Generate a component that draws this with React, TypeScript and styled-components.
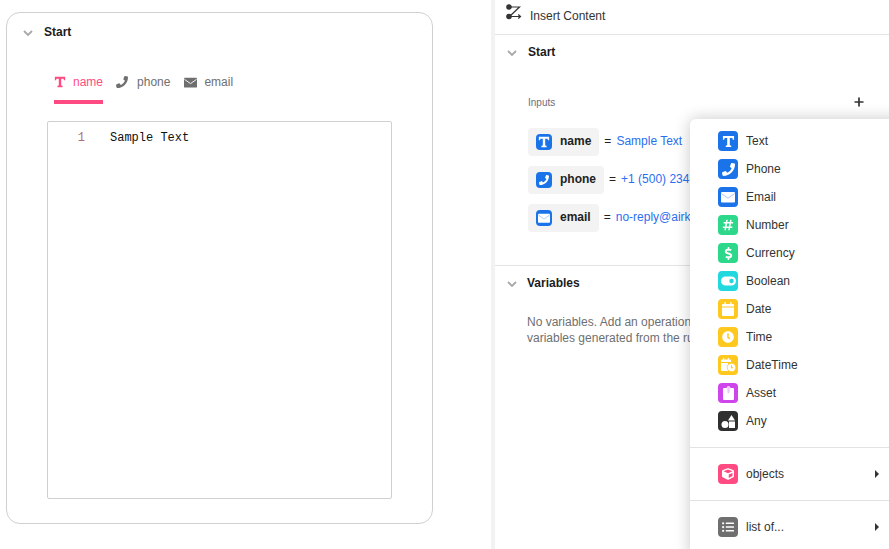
import React from "react";
import styled, { createGlobalStyle } from "styled-components";
import { FaPhone, FaHashtag, FaDollarSign, FaCube, FaListUl, FaClock } from "react-icons/fa";

const Global = createGlobalStyle`
  html, body { margin: 0; padding: 0; height: 100%; overflow: hidden; background: #fff; }
  body { font-family: "Liberation Sans", Arial, sans-serif; font-size: 12px; color: #222; }
  #root { height: 100%; }
`;

const Page = styled.div`
  display: flex;
  width: 889px;
  height: 549px;
  overflow: hidden;
  position: relative;
`;
const LeftPane = styled.div`
  width: 491px;
  flex: none;
  padding: 12px 58px 25px 6px;
  box-sizing: border-box;
`;
const Divider = styled.div`
  width: 4px;
  flex: none;
  background: #f2f2f2;
`;
const RightPane = styled.div`
  flex: 1;
  min-width: 0;
  display: flex;
  flex-direction: column;
`;
const Card = styled.div`
  height: 100%;
  box-sizing: border-box;
  border: 1px solid #d0d0d0;
  border-radius: 14px;
  padding: 0 40px 24px;
  display: flex;
  flex-direction: column;
`;
const SectionHead = styled.div<{ $inset: number; $h: number }>`
  display: flex;
  align-items: center;
  height: ${(p) => p.$h}px;
  margin-left: ${(p) => p.$inset}px;
  flex: none;
`;
const ChevronBox = styled.svg<{ $gap: number }>`
  width: 10px;
  height: 6px;
  margin-right: ${(p) => p.$gap}px;
  flex: none;
  margin-top: 2px;
`;
const SectionTitle = styled.span`
  font-size: 12px;
  font-weight: 700;
  color: #1c1c1c;
`;
const Tabs = styled.div`
  display: flex;
  align-items: flex-start;
  gap: 13px;
  margin: 19px 0 17px 7px;
  flex: none;
`;
const Tab = styled.div<{ $active?: boolean; $gap: number; $pad?: number }>`
  height: 34px;
  padding: 4px ${(p) => p.$pad ?? 0}px 0 0;
  box-sizing: border-box;
  display: flex;
  align-items: flex-start;
  gap: ${(p) => p.$gap}px;
  line-height: 16px;
  font-size: 12px;
  color: ${(p) => (p.$active ? "#ff4b82" : "#6f6f6f")};
  border-bottom: 4px solid ${(p) => (p.$active ? "#ff4b82" : "transparent")};
  svg { margin-top: 2px; flex: none; }
`;
const Editor = styled.div`
  flex: 1;
  border: 1px solid #d0d0d0;
  border-radius: 2px;
  display: flex;
  align-items: flex-start;
  padding-top: 8px;
  font-family: "Liberation Mono", "Courier New", monospace;
  font-size: 12px;
  line-height: 16px;
`;
const LineNo = styled.span`
  width: 37px;
  text-align: right;
  color: #b07070;
  flex: none;
`;
const Code = styled.span`
  margin-left: 25px;
  color: #111;
`;
const TopBar = styled.div`
  height: 35px;
  box-sizing: border-box;
  flex: none;
  border-bottom: 1px solid #e4e4e4;
  display: flex;
  align-items: flex-start;
  padding: 4px 0 0 11px;
  color: #333;
  span { margin: 5px 0 0 8px; line-height: 14px; }
`;
const StartSection = styled.div`
  height: 231px;
  box-sizing: border-box;
  flex: none;
  border-bottom: 1px solid #e4e4e4;
`;
const InputsHead = styled.div`
  display: flex;
  justify-content: space-between;
  align-items: center;
  margin: 25px 25px 18px 33px;
  height: 16px;
`;
const InputsLabel = styled.span`
  font-size: 10px;
  color: #6e6e80;
`;
const InputRow = styled.div`
  display: flex;
  align-items: flex-start;
  height: 28px;
  line-height: 26px;
  margin: 0 0 10px 33px;
  white-space: nowrap;
`;
const Chip = styled.div`
  display: flex;
  align-items: center;
  height: 28px;
  padding: 0 8px;
  background: #f3f3f3;
  border-radius: 4px;
  gap: 8px;
  font-weight: 700;
  font-size: 12px;
  color: #222;
`;
const ChipLabel = styled.span`
  align-self: flex-start;
`;
const Eq = styled.span`
  margin: 0 5px;
  color: #222;
`;
const Val = styled.span`
  color: #2a6ff0;
`;
const VarBody = styled.p`
  margin: 14px 0 0 32px;
  line-height: 16px;
  color: #6f6f6f;
  white-space: nowrap;
`;
const Menu = styled.div`
  position: absolute;
  left: 690px;
  top: 119px;
  width: 230px;
  height: 440px;
  background: #fff;
  border-radius: 6px;
  box-shadow: 0 0 16px rgba(0, 0, 0, 0.22);
  padding-top: 8px;
  box-sizing: border-box;
`;
const MenuRow = styled.div`
  height: 28px;
  display: flex;
  align-items: center;
  padding-left: 28px;
  gap: 8px;
  color: #333;
  position: relative;
`;
const MenuSep = styled.div`
  border-top: 1px solid #e2e2e2;
  height: 53px;
  box-sizing: border-box;
  display: flex;
  align-items: center;
`;
const Group = styled.div<{ $top?: number }>`
  width: 199px;
  margin-top: ${(p) => p.$top ?? 0}px;
`;
const Badge = styled.div<{ $bg: string; $size?: number }>`
  width: ${(p) => p.$size ?? 20}px;
  height: ${(p) => p.$size ?? 20}px;
  border-radius: 4px;
  background: ${(p) => p.$bg};
  color: #fff;
  display: flex;
  align-items: center;
  justify-content: center;
  flex: none;
`;
const Caret = styled.span`
  position: absolute;
  left: 185px;
  top: 10px;
  width: 0;
  height: 0;
  border-left: 4.5px solid #333;
  border-top: 4px solid transparent;
  border-bottom: 4px solid transparent;
`;

const Chevron = ({ gap = 11 }: { gap?: number }) => (
  <ChevronBox $gap={gap} viewBox="0 0 10 6">
    <path d="M1 1l4 4 4-4" fill="none" stroke="#a8a8a8" strokeWidth="1.8" />
  </ChevronBox>
);
const TIcon = ({ size = 13 }: { size?: number }) => (
  <svg width={size} height={size} viewBox="0 0 14 14" fill="currentColor">
    <path d="M1 1h12v4h-1.3l-.6-1.9H8.4v7.9l1.6.5V13H4v-1.5l1.6-.5V3.1H2.9L2.3 5H1z" />
  </svg>
);
const Env = ({ size = 14, line = "#a9c8f7" }: { size?: number; line?: string }) => (
  <svg width={size} height={size} viewBox="0 0 14 14">
    <rect x="0" y="2" width="14" height="10.5" rx="1" fill="currentColor" />
    <path d="M0.5 3.6L7 8.2l6.5-4.6" fill="none" stroke={line} strokeWidth="1" />
  </svg>
);
const Toggle = () => (
  <svg width="15" height="10" viewBox="0 0 15 10">
    <path fill="#fff" fillRule="evenodd" d="M4.5 0.5h6a4.5 4.5 0 010 9h-6a4.5 4.5 0 010-9zM10.5 2.8a2.2 2.2 0 100 4.4 2.2 2.2 0 000-4.4z" />
  </svg>
);
const Cal = () => (
  <svg width="12" height="14" viewBox="0 0 12 14" fill="#fff">
    <path d="M2.5 0h1.2v2h4.6V0h1.2v2H11a1 1 0 011 1v1.5H0V3a1 1 0 011-1h1.5zM0 5.5h12V13a1 1 0 01-1 1H1a1 1 0 01-1-1z" />
  </svg>
);
const CalClock = () => (
  <svg width="15" height="14" viewBox="0 0 15 14">
    <path fill="#fff" d="M2 0h1.2v1.5h3.6V0H8v1.5h1a1 1 0 011 1V4H0V2.5a1 1 0 011-1h1zM0 5h7v8H1a1 1 0 01-1-1z" />
    <circle cx="10.5" cy="9.5" r="4.3" fill="#fff" stroke="#ffc81f" strokeWidth=".8" />
    <path d="M10.5 7.2v2.5h1.6" fill="none" stroke="#ffc81f" strokeWidth="1.1" />
  </svg>
);
const Clip = () => (
  <svg width="11" height="14" viewBox="0 0 11 14">
    <path fill="#fff" d="M1 2h2.8v1.5h3.4V2H10a1 1 0 011 1v10a1 1 0 01-1 1H1a1 1 0 01-1-1V3a1 1 0 011-1z" />
    <rect x="4" y="0.5" width="3" height="7" rx="1.5" fill="#efc4f8" stroke="#fff" strokeWidth=".8" />
  </svg>
);
const Shapes = () => (
  <svg width="15" height="15" viewBox="0 0 15 15" fill="#fff">
    <path d="M10.5 1l3.5 5.5H7zM8 7.5h6V14H8z" />
    <circle cx="4" cy="10.5" r="3.5" />
  </svg>
);

const types: [string, string, React.ReactNode][] = [
  ["Text", "#1a73e8", <TIcon />],
  ["Phone", "#1a73e8", <FaPhone size={13} />],
  ["Email", "#1a73e8", <Env />],
  ["Number", "#2ed88a", <FaHashtag size={12} />],
  ["Currency", "#2ed88a", <FaDollarSign size={13} />],
  ["Boolean", "#21d8de", <Toggle />],
  ["Date", "#ffc81f", <Cal />],
  ["Time", "#ffc81f", <FaClock size={12} />],
  ["DateTime", "#ffc81f", <CalClock />],
  ["Asset", "#cf45ec", <Clip />],
  ["Any", "#2f2f2f", <Shapes />],
];

export default function App() {
  return (
    <Page>
      <Global />
      <LeftPane>
        <Card>
          <SectionHead $inset={-24} $h={38}>
            <Chevron />
            <SectionTitle>Start</SectionTitle>
          </SectionHead>
          <Tabs>
            <Tab $active $gap={7}>
              <TIcon size={12} />
              name
            </Tab>
            <Tab $gap={9} $pad={1}>
              <FaPhone size={12} />
              phone
            </Tab>
            <Tab $gap={7}>
              <Env size={13} line="#fff" />
              email
            </Tab>
          </Tabs>
          <Editor>
            <LineNo>1</LineNo>
            <Code>Sample Text</Code>
          </Editor>
        </Card>
      </LeftPane>
      <Divider />
      <RightPane>
        <TopBar>
          <svg width="16" height="16" viewBox="0 0 16 16" fill="none" stroke="#333" strokeWidth="1.2">
            <circle cx="3" cy="3" r="2.2" fill="#333" />
            <circle cx="3" cy="12.5" r="2.2" fill="#333" />
            <path d="M5 3h8.5l-10 9.5M5 12.5h9.5M12.3 10.5l2.2 2-2.2 2" />
          </svg>
          <span>Insert Content</span>
        </TopBar>
        <StartSection>
          <SectionHead $inset={12} $h={34}>
            <Chevron />
            <SectionTitle>Start</SectionTitle>
          </SectionHead>
          <InputsHead>
            <InputsLabel>Inputs</InputsLabel>
            <svg width="10" height="10" viewBox="0 0 10 10">
              <path d="M5 0.5v9M0.5 5h9" stroke="#333" strokeWidth="1.7" />
            </svg>
          </InputsHead>
          <InputRow>
            <Chip>
              <Badge $bg="#1a73e8" $size={16}><TIcon size={12} /></Badge>
              <ChipLabel>name</ChipLabel>
            </Chip>
            <Eq>=</Eq>
            <Val>Sample Text</Val>
          </InputRow>
          <InputRow>
            <Chip>
              <Badge $bg="#1a73e8" $size={16}><FaPhone size={10} /></Badge>
              <ChipLabel>phone</ChipLabel>
            </Chip>
            <Eq>=</Eq>
            <Val>+1 (500) 234-5678</Val>
          </InputRow>
          <InputRow>
            <Chip>
              <Badge $bg="#1a73e8" $size={16}><Env size={12} /></Badge>
              <ChipLabel>email</ChipLabel>
            </Chip>
            <Eq>=</Eq>
            <Val>no-reply@airkit.com</Val>
          </InputRow>
        </StartSection>
        <SectionHead $inset={12} $h={34}>
          <Chevron gap={10} />
          <SectionTitle>Variables</SectionTitle>
        </SectionHead>
        <VarBody>
          No variables. Add an operation to see
          <br />
          variables generated from the run
        </VarBody>
      </RightPane>
      <Menu>
        <Group>
          {types.map(([label, bg, icon]) => (
            <MenuRow key={label}>
              <Badge $bg={bg}>{icon}</Badge>
              {label}
            </MenuRow>
          ))}
        </Group>
        <Group $top={12}>
          <MenuSep>
            <MenuRow>
              <Badge $bg="#ff4b82"><FaCube size={12} /></Badge>
              objects
              <Caret />
            </MenuRow>
          </MenuSep>
          <MenuSep>
            <MenuRow>
              <Badge $bg="#6f6f6f"><FaListUl size={12} /></Badge>
              list of...
              <Caret />
            </MenuRow>
          </MenuSep>
        </Group>
      </Menu>
    </Page>
  );
}
